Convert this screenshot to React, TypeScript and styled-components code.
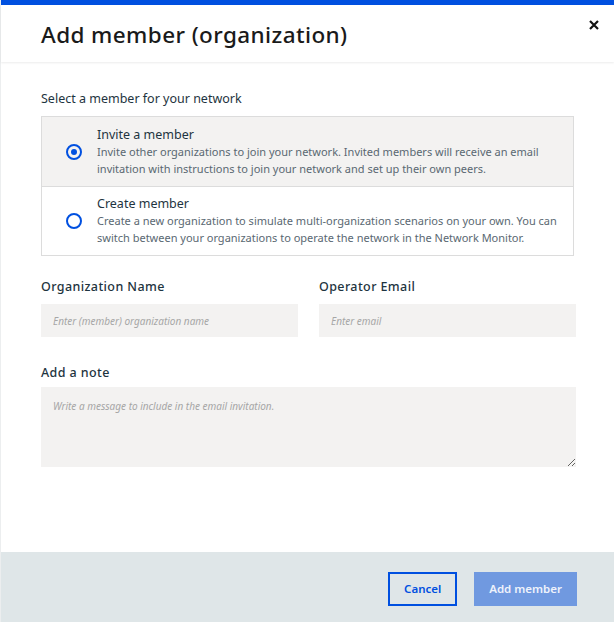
import React from "react";
import styled, { createGlobalStyle } from "styled-components";

const Global = createGlobalStyle`
  html, body { margin: 0; padding: 0; background: #eceeef; }
  body { font-family: "Noto Sans", "Open Sans", sans-serif; }
  * { box-sizing: border-box; }
`;

const Page = styled.div`
  width: 614px;
  height: 622px;
  display: flex;
  padding-left: 1px;
  overflow: hidden;
`;

const Modal = styled.div`
  flex: 1;
  display: flex;
  flex-direction: column;
  background: #fff;
  border-top: 5px solid #0050e0;
`;

const Header = styled.div`
  height: 57px;
  display: flex;
  align-items: center;
  justify-content: space-between;
  padding: 0 14px 0 40px;
  box-shadow: 0 1px 2px rgba(0, 0, 0, 0.08);
  position: relative;
`;

const Title = styled.h1`
  margin: 0;
  margin-top: 2px;
  font-size: 22.5px;
  font-weight: 500;
  color: #1a1a1a;
  letter-spacing: 0.4px;
`;

const Close = styled.button`
  align-self: flex-start;
  margin-top: 14px;
  border: 0;
  background: none;
  padding: 0;
  width: 12px;
  height: 12px;
  display: flex;
`;

const Body = styled.div`
  flex: 1;
  padding: 28px 38px 0 40px;
  display: flex;
  flex-direction: column;
`;

const SectionLabel = styled.div`
  font-size: 12.5px;
  color: #1e3440;
  margin-bottom: 9px;
`;

const OptionGroup = styled.div`
  width: 533px;
  border: 1px solid #dcdcdc;
  display: flex;
  flex-direction: column;
`;

const Option = styled.label<{ $selected?: boolean }>`
  display: flex;
  align-items: center;
  height: 69px;
  padding: 0 8px 0 24px;
  background: ${(p) => (p.$selected ? "#f3f2f1" : "#fff")};
  & + & {
    border-top: 1px solid #dcdcdc;
  }
`;

const Radio = styled.span<{ $checked?: boolean }>`
  width: 16px;
  height: 16px;
  border-radius: 50%;
  border: 2px solid #0050e0;
  flex: none;
  display: flex;
  align-items: center;
  justify-content: center;
  margin-right: 15px;
  &::after {
    content: "";
    width: 6px;
    height: 6px;
    border-radius: 50%;
    background: ${(p) => (p.$checked ? "#0050e0" : "transparent")};
  }
`;

const OptionText = styled.div`
  display: flex;
  flex-direction: column;
  margin-top: 2px;
`;

const OptionTitle = styled.div`
  font-size: 12.5px;
  color: #1e3440;
  line-height: 17px;
  margin-top: -3px;
`;

const OptionDesc = styled.div`
  font-size: 11px;
  color: #5a6872;
  line-height: 17px;
`;

const Row = styled.div`
  display: grid;
  grid-template-columns: 257px 257px;
  column-gap: 21px;
  margin-top: 22px;
`;

const Field = styled.div<{ $full?: boolean }>`
  display: flex;
  flex-direction: column;
  margin-top: ${(p) => (p.$full ? "27px" : "0")};
`;

const Label = styled.label<{ $tight?: boolean }>`
  font-size: 12.5px;
  font-weight: 500;
  color: #1e3440;
  letter-spacing: 0.4px;
  margin-bottom: ${(p) => (p.$tight ? "6px" : "9px")};
`;

const Input = styled.input`
  height: 33px;
  border: 0;
  background: #f3f2f1;
  padding: 0 12px;
  font-family: inherit;
  font-size: 10px;
  font-style: italic;
  outline: none;
  &::placeholder {
    color: #a6a6a6;
  }
`;

const TextArea = styled.textarea`
  display: block;
  height: 80px;
  width: 535px;
  border: 0;
  background: #f3f2f1;
  padding: 12px 12px;
  font-family: inherit;
  font-size: 10px;
  font-style: italic;
  resize: vertical;
  outline: none;
  &::placeholder {
    color: #a6a6a6;
  }
`;

const Footer = styled.div`
  height: 70px;
  background: #dfe6e8;
  display: flex;
  align-items: center;
  justify-content: flex-end;
  gap: 17px;
  padding: 3px 37px 0 0;
`;

const Button = styled.button<{ $primary?: boolean }>`
  height: 34px;
  padding: 0 13px;
  font-family: inherit;
  font-size: 11.5px;
  font-weight: 600;
  border: 2px solid ${(p) => (p.$primary ? "transparent" : "#0050e0")};
  background: ${(p) => (p.$primary ? "#7099e0" : "transparent")};
  color: ${(p) => (p.$primary ? "#eef2fb" : "#0050e0")};
  min-width: ${(p) => (p.$primary ? "101px" : "69px")};
`;

export default function App() {
  return (
    <Page>
      <Global />
      <Modal>
        <Header>
          <Title>Add member (organization)</Title>
          <Close aria-label="Close">
            <svg width="12" height="12" viewBox="0 0 12 12">
              <path d="M2 2 L10 10 M10 2 L2 10" stroke="#111" strokeWidth="2.2" />
            </svg>
          </Close>
        </Header>
        <Body>
          <SectionLabel>Select a member for your network</SectionLabel>
          <OptionGroup>
            <Option $selected>
              <Radio $checked />
              <OptionText>
                <OptionTitle>Invite a member</OptionTitle>
                <OptionDesc>
                  Invite other organizations to join your network. Invited members will receive an email
                  invitation with instructions to join your network and set up their own peers.
                </OptionDesc>
              </OptionText>
            </Option>
            <Option>
              <Radio />
              <OptionText>
                <OptionTitle>Create member</OptionTitle>
                <OptionDesc>
                  Create a new organization to simulate multi-organization scenarios on your own. You can
                  switch between your organizations to operate the network in the Network Monitor.
                </OptionDesc>
              </OptionText>
            </Option>
          </OptionGroup>
          <Row>
            <Field>
              <Label>Organization Name</Label>
              <Input placeholder="Enter (member) organization name" />
            </Field>
            <Field>
              <Label>Operator Email</Label>
              <Input placeholder="Enter email" />
            </Field>
          </Row>
          <Field $full>
            <Label $tight>Add a note</Label>
            <TextArea placeholder="Write a message to include in the email invitation." />
          </Field>
        </Body>
        <Footer>
          <Button>Cancel</Button>
          <Button $primary>Add member</Button>
        </Footer>
      </Modal>
    </Page>
  );
}
